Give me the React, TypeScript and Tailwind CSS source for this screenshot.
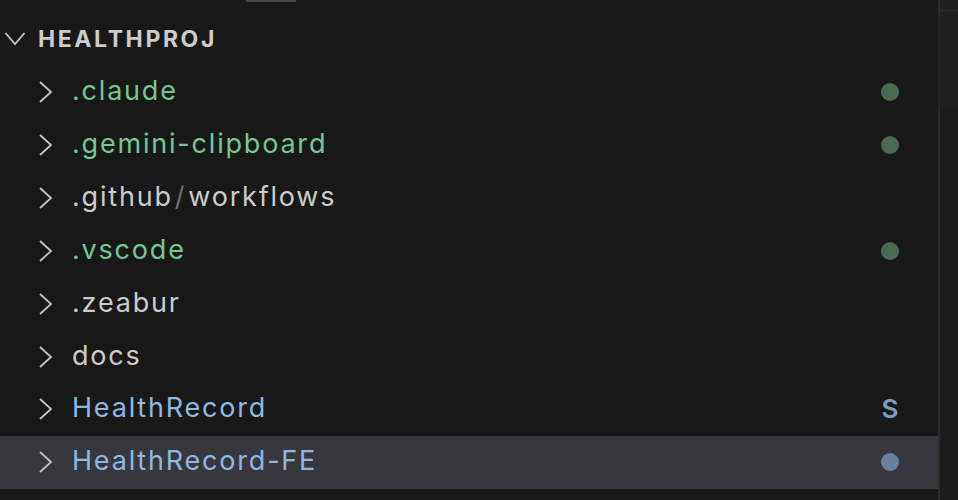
type Row = {
  name: string
  suffix?: string
  color: string
  badge?: 'dot-green' | 'dot-blue' | 'S'
  selected?: boolean
}

const ROWS: Row[] = [
  { name: '.claude', color: 'text-[#73c991]', badge: 'dot-green' },
  { name: '.gemini-clipboard', color: 'text-[#73c991]', badge: 'dot-green' },
  { name: '.github', suffix: 'workflows', color: 'text-[#cccccc]' },
  { name: '.vscode', color: 'text-[#73c991]', badge: 'dot-green' },
  { name: '.zeabur', color: 'text-[#cccccc]' },
  { name: 'docs', color: 'text-[#cccccc]' },
  { name: 'HealthRecord', color: 'text-[#8db9e2]', badge: 'S' },
  { name: 'HealthRecord-FE', color: 'text-[#8db9e2]', badge: 'dot-blue', selected: true },
]

function Chevron({ open }: { open?: boolean }) {
  if (open) {
    return (
      <svg width="22" height="16" viewBox="0 0 22 16" className="ml-[4px] shrink-0">
        <polyline points="1.5,2 11,13 20.5,2" fill="none" stroke="#c5c5c5" strokeWidth="1.8" />
      </svg>
    )
  }
  return (
    <svg width="16" height="24" viewBox="0 0 16 24" className="ml-[38px] shrink-0">
      <polyline points="2,2 13,12 2,22" fill="none" stroke="#c5c5c5" strokeWidth="1.8" />
    </svg>
  )
}

function Badge({ kind }: { kind?: Row['badge'] }) {
  if (!kind) return null
  if (kind === 'S') {
    return <span className="text-[26px] font-semibold leading-none text-[#7b9dc4]">S</span>
  }
  return (
    <span
      className={`block h-[18px] w-[18px] rounded-full ${
        kind === 'dot-green' ? 'bg-[#4b6b51]' : 'bg-[#6a7f9c]'
      }`}
    />
  )
}

export default function App() {
  return (
    <div className="flex h-[500px] w-[958px] overflow-hidden bg-[#181818] font-['Inter',sans-serif]">
      <div className="flex w-[938px] flex-col">
        <div className="h-[13px] pl-[246px]">
          <div className="h-[2px] w-[50px] bg-[#454545]" />
        </div>
        <div className="flex h-[52.86px] items-center text-[#cccccc]">
          <Chevron open />
          <span className="ml-[12px] text-[23px] font-bold tracking-[2.6px]">HEALTHPROJ</span>
        </div>
        {ROWS.map((row) => (
          <div
            key={row.name}
            className={`flex h-[52.86px] shrink-0 items-center ${row.selected ? 'bg-[#37373d]' : ''}`}
          >
            <Chevron />
            <span className={`mb-[3px] ml-[18px] text-[27px] leading-none tracking-[1.8px] ${row.color}`}>
              {row.name}
              {row.suffix && (
                <>
                  <span className="mx-[2px] text-[#6e6e6e]">/</span>
                  <span className="text-[#cccccc]">{row.suffix}</span>
                </>
              )}
            </span>
            <div className="ml-auto mr-[36px] flex w-[24px] justify-center">
              <Badge kind={row.badge} />
            </div>
          </div>
        ))}
      </div>
      <div className="flex w-[20px] flex-col border-l-2 border-[#2b2b2b]">
        <div className="h-[10px] bg-[#1f1f1f]" />
        <div className="h-[1px] bg-[#2b2b2b]" />
        <div className="h-[97px] bg-[#1f1f1f] shadow-[0_3px_3px_-1px_#000]" />
        <div className="flex-1 bg-[#1c1c1c]" />
      </div>
    </div>
  )
}
